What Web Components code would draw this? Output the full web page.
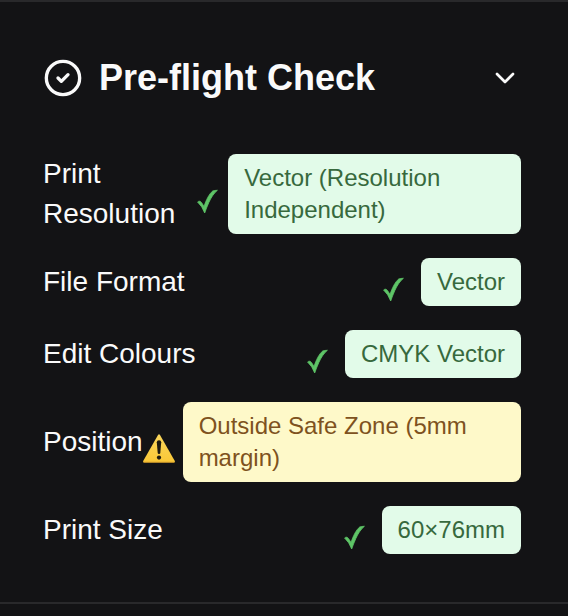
<!DOCTYPE html>
<html lang="en">
<head>
<meta charset="utf-8">
<meta name="viewport" content="width=device-width, initial-scale=1">
<title>Pre-flight Check</title>
<style>
  body {
    margin: 0;
    background: #131315;
    color: #fafafa;
    font-family: "Liberation Sans", Arial, Helvetica, sans-serif;
  }
</style>
</head>
<body>
<preflight-card heading="Pre-flight Check">
  <check-row label="Print Resolution" status="pass">Vector (Resolution Independent)</check-row>
  <check-row label="File Format" status="pass">Vector</check-row>
  <check-row label="Edit Colours" status="pass">CMYK Vector</check-row>
  <check-row label="Position" status="warn">Outside Safe Zone (5mm margin)</check-row>
  <check-row label="Print Size" status="pass">60×76mm</check-row>
</preflight-card>

<template id="card-template">
  <style>
    :host {
      display: block;
      padding: 48px 47px 48px 43px;
      border-top: 2px solid #29292b;
      border-bottom: 2px solid #29292b;
    }
    h2 { margin: 0 0 48px; font: inherit; }
    button {
      display: flex;
      align-items: center;
      gap: 16px;
      width: 100%;
      padding: 0;
      border: 0;
      background: none;
      color: inherit;
      font: bold 36px/56px "Liberation Sans", Arial, Helvetica, sans-serif;
      text-align: left;
      cursor: pointer;
    }
    .title { flex: 1; }
    svg {
      flex: none;
      fill: none;
      stroke: currentColor;
      stroke-width: 2;
      stroke-linecap: round;
      stroke-linejoin: round;
    }
    .rows { display: flex; flex-direction: column; gap: 24px; }
    .rows[hidden] { display: none; }
  </style>
  <h2>
    <button type="button" aria-expanded="true" aria-controls="rows">
      <svg width="40" height="40" viewBox="0 0 24 24" aria-hidden="true"><circle cx="12" cy="12" r="10"/><path d="m9 12 2 2 4-4"/></svg>
      <span class="title"></span>
      <svg width="32" height="32" viewBox="0 0 24 24" aria-hidden="true"><path d="m6 9 6 6 6-6"/></svg>
    </button>
  </h2>
  <div class="rows" id="rows"><slot></slot></div>
</template>

<template id="row-template">
  <style>
    :host {
      display: flex;
      align-items: center;
      justify-content: space-between;
    }
    .label { font-size: 28px; line-height: 40px; }
    .result { display: flex; align-items: center; gap: 8px; }
  </style>
  <span class="label" id="label"></span>
  <div class="result" role="group" aria-labelledby="label">
    <status-icon></status-icon>
    <status-pill><slot></slot></status-pill>
  </div>
</template>

<template id="pill-template">
  <style>
    :host {
      display: block;
      padding: 8px 16px;
      border-radius: 8px;
      font-size: 24px;
      line-height: 32px;
      background: #e2fbe9;
      color: #37693d;
    }
    :host([status="warn"]) { background: #fef9c9; color: #7e5220; }
  </style>
  <slot></slot>
</template>

<template id="icon-template">
  <style>
    :host { display: block; width: 30px; min-width: 22px; }
    :host([status="warn"]) { flex: none; width: 32px; }
    svg { display: none; overflow: visible; }
    :host([status="pass"]) .pass,
    :host([status="warn"]) .warn { display: block; }
  </style>
  <svg class="pass" width="22" height="48" viewBox="0 0 22 48" role="img" aria-label="Passed">
    <path fill="#5ec567" stroke="#5ec567" stroke-width=".8" stroke-linejoin="round" d="M.6 32Q1.6 31 3 31.2Q5 32.4 7 36.6C9.3 29.4 12.2 24 15.6 21.1Q17 20.3 20.4 20.3C16.6 23.6 14 27.6 11.8 32.6Q9.3 38.2 7.7 43Q5.2 36.2 .6 32Z"/>
  </svg>
  <svg class="warn" width="32" height="48" viewBox="0 0 32 48" role="img" aria-label="Warning">
    <defs>
      <linearGradient id="amber" x1="0" y1="0" x2="0" y2="1">
        <stop offset="0" stop-color="#f9d65c"/>
        <stop offset="1" stop-color="#fac736"/>
      </linearGradient>
    </defs>
    <path fill="url(#amber)" d="M15 17Q16 15.4 17 17L31.8 43Q32.4 44.6 31 44.6H1Q-.4 44.6.2 43Z"/>
    <path fill="none" stroke="#d79a28" stroke-width=".8" d="M.8 44.2H31.2"/>
    <path fill="#1d1a10" d="M13.8 24.3Q13.8 22.3 16 22.3T18.2 24.3L17.3 35Q17.2 36 16 36T14.7 35Z"/>
    <circle cx="16" cy="39.6" r="2.1" fill="#1d1a10"/>
  </svg>
</template>

<script>
  class TemplateElement extends HTMLElement {
    constructor() {
      super();
      const template = document.getElementById(this.constructor.templateId);
      this.attachShadow({ mode: "open" }).append(template.content.cloneNode(true));
    }
  }

  class StatusIcon extends TemplateElement {
    static templateId = "icon-template";
  }

  class StatusPill extends TemplateElement {
    static templateId = "pill-template";
  }

  class CheckRow extends TemplateElement {
    static templateId = "row-template";
    connectedCallback() {
      const status = this.getAttribute("status");
      this.shadowRoot.querySelector(".label").textContent = this.getAttribute("label");
      this.shadowRoot.querySelector("status-icon").setAttribute("status", status);
      this.shadowRoot.querySelector("status-pill").setAttribute("status", status);
    }
  }

  class PreflightCard extends TemplateElement {
    static templateId = "card-template";
    connectedCallback() {
      const button = this.shadowRoot.querySelector("button");
      const rows = this.shadowRoot.querySelector(".rows");
      this.shadowRoot.querySelector(".title").textContent = this.getAttribute("heading");
      button.onclick = () => {
        rows.hidden = !rows.hidden;
        button.setAttribute("aria-expanded", String(!rows.hidden));
      };
    }
  }

  customElements.define("status-icon", StatusIcon);
  customElements.define("status-pill", StatusPill);
  customElements.define("check-row", CheckRow);
  customElements.define("preflight-card", PreflightCard);
</script>
</body>
</html>
